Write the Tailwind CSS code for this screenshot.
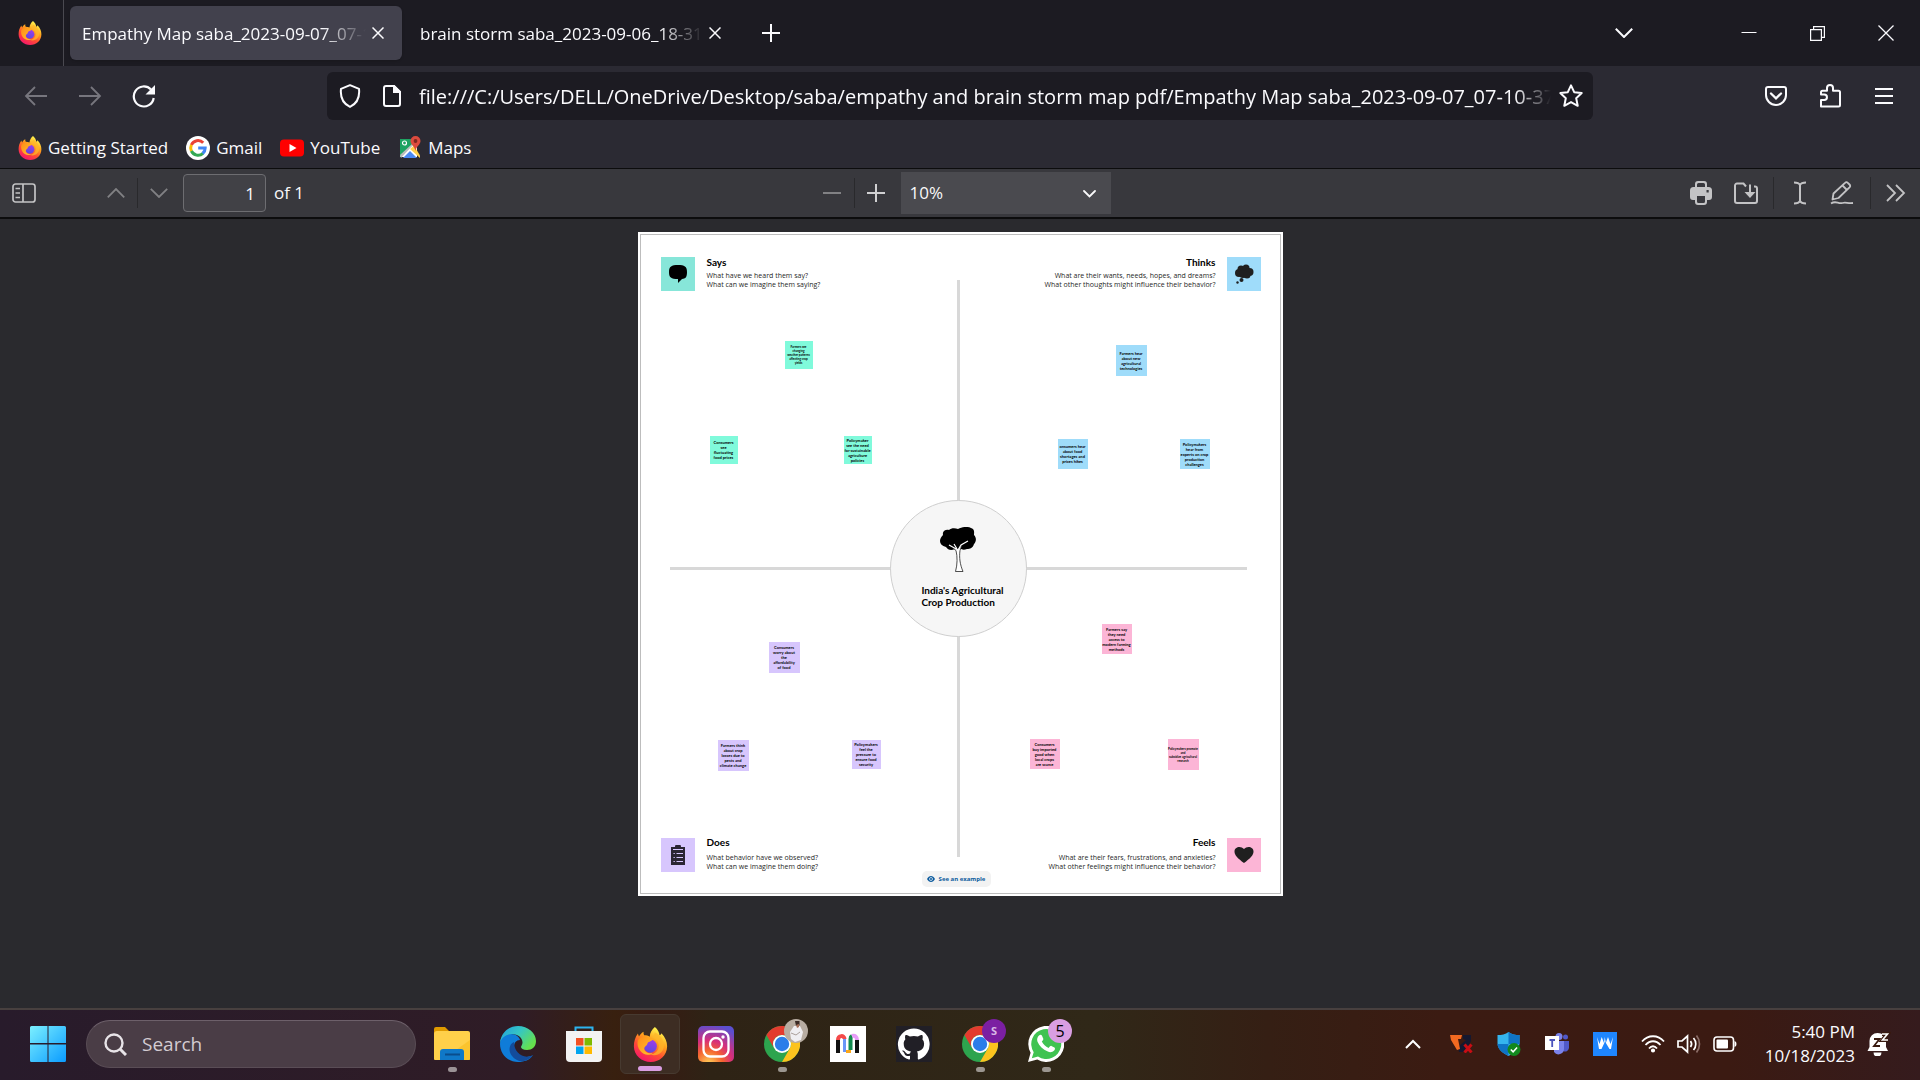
<!DOCTYPE html>
<html lang="en">
<head>
<meta charset="utf-8">
<title>Empathy Map saba_2023-09-07_07-10-37.pdf</title>
<script src="https://cdn.jsdelivr.net/npm/@tailwindcss/browser@4"></script>
</head>
<body class="min-h-screen flex flex-col bg-[#2a2a2e] text-[#fbfbfe] font-['Open_Sans',sans-serif] text-[17px] overflow-hidden">

<svg class="absolute size-0" aria-hidden="true">
  <defs>
    <linearGradient id="ffBody" x1="0.8" y1="0.1" x2="0.3" y2="1"><stop offset="0" stop-color="#fff44f"/><stop offset=".35" stop-color="#ffa01c"/><stop offset=".65" stop-color="#ff4b34"/><stop offset="1" stop-color="#f5156c"/></linearGradient>
    <linearGradient id="ffGlobe" x1="0.7" y1="0" x2="0.4" y2="1"><stop offset="0" stop-color="#a13be8"/><stop offset="1" stop-color="#5a4ae0"/></linearGradient>
    <linearGradient id="ffHead" x1="0" y1="0" x2="1" y2="1"><stop offset="0" stop-color="#ff8a16"/><stop offset="1" stop-color="#ffc42c"/></linearGradient>
    <symbol id="firefox" viewBox="0 0 32 32">
      <path fill="url(#ffBody)" d="M20 0c3 2.600 4 5 4.300 7.500 1-.6 1.500-1 1.700-1.900 3.400 3.600 5.200 7.600 5.200 12C31.200 26 24.500 32 16.200 32S.8 26 .8 17.600c0-4.200 1.200-8.300 3.700-11.600.2 1 .5 1.800 1 2.600C6.500 6.700 8 5.200 9.700 4.300c-.2 1.300 0 2.300.6 3.300 2 0 3.600.4 5 1.200C15.500 5.400 17.300 2 20 0z"/>
      <circle cx="15.800" cy="17.500" r="6" fill="url(#ffGlobe)"/>
      <path fill="url(#ffHead)" d="M4.500 12c2-3 5.500-4.200 9-2.900 1.500.6 2.500 1.500 4.700 1.800-.4 1.800-2.800 2.200-4.300 3.100-.9.700-.5 2-1.700 3-1.800 1.200-2.600 3.200-1 5 1.500 2 4.200 2.400 6.800 1.900-3.300 2.300-8.500 1.800-11.300-1.900-2.400-3.200-3.200-6.700-2.200-10z"/>
      <path fill="#ffb52a" opacity=".75" d="M17.500 9.500c3.500.8 6 3.600 6.100 7.400.1 4.600-3.500 8-8 8.200 6.500 2.600 13-2 12.700-8.800-.2-5-4-9.500-8.300-11.300-.4 1.800-1.600 2.900-2.500 4.500z"/>
    </symbol>
    <symbol id="chrome" viewBox="0 0 36 36">
      <circle cx="18" cy="18" r="18" fill="#2da44e"/>
      <path fill="#e33b2e" d="M2.400 9A18 18 0 0 1 33.600 9H18a9 9 0 0 0-7.800 13.500z"/>
      <path fill="#fcc31e" d="M33.600 9A18 18 0 0 1 18 36l7.800-13.500A9 9 0 0 0 18 9z"/>
      <circle cx="18" cy="18" r="9" fill="#fff"/><circle cx="18" cy="18" r="7.200" fill="#2b7de9"/>
    </symbol>
  </defs>
</svg>

<!-- Tab strip -->
<header class="h-[66px] bg-[#1c1b22] flex items-center shrink-0">
  <div class="w-16 h-full flex items-center pl-[18px] border-r border-[#4a4950]"><svg class="size-6"><use href="#firefox"/></svg></div>
  <div role="tablist" class="flex items-center ml-1.5">
    <div role="tab" aria-selected="true" class="w-[332px] h-[54px] rounded-md bg-[#42414d] flex items-center pl-3 pr-3 shadow">
      <span class="flex-1 pt-px overflow-hidden whitespace-nowrap [mask-image:linear-gradient(to_left,transparent,black_44px)]">Empathy Map saba_2023-09-07_07-10-37.pdf</span>
      <button aria-label="Close tab" class="size-6 grid place-items-center"><svg class="size-3" viewBox="0 0 12 12" fill="none" stroke="currentColor" stroke-width="1.500"><path d="M.5.5l11 11M11.500.5l-11 11"/></svg></button>
    </div>
    <div role="tab" aria-selected="false" class="w-[338px] h-[54px] flex items-center pl-[18px] pr-[13px]">
      <span class="flex-1 pt-px overflow-hidden whitespace-nowrap [mask-image:linear-gradient(to_left,transparent,black_44px)]">brain storm saba_2023-09-06_18-31-25.pdf</span>
      <button aria-label="Close tab" class="size-6 grid place-items-center"><svg class="size-3" viewBox="0 0 12 12" fill="none" stroke="currentColor" stroke-width="1.500"><path d="M.5.5l11 11M11.500.5l-11 11"/></svg></button>
    </div>
  </div>
  <button aria-label="New tab" class="ml-[13px] size-[36px] grid place-items-center"><svg class="size-[18px]" viewBox="0 0 18 18" stroke="currentColor" stroke-width="2"><path d="M9 0v18M0 9h18"/></svg></button>
  <div class="ml-auto flex items-center">
    <button aria-label="List all tabs" class="w-[60px] mr-[60px] grid place-items-center"><svg class="w-[18px] h-[10px]" viewBox="0 0 18 10" fill="none" stroke="currentColor" stroke-width="2"><path d="M.8.8L9 9 17.200.8"/></svg></button>
    <button aria-label="Minimize" class="w-[69px] grid place-items-center"><svg class="w-4 h-4" viewBox="0 0 16 16" stroke="currentColor"><path d="M.5 7.500h15"/></svg></button>
    <button aria-label="Restore" class="w-[69px] grid place-items-center"><svg class="size-[15px]" viewBox="0 0 15 15" fill="none" stroke="currentColor" stroke-width="1.200"><path d="M.6 3.600h10.800v10.800H.6zM3.600 3.600v-3h10.800v10.800h-3"/></svg></button>
    <button aria-label="Close" class="w-[68px] grid place-items-center"><svg class="size-4" viewBox="0 0 16 16" stroke="currentColor" stroke-width="1.300"><path d="M.5.5l15 15M15.500.5l-15 15"/></svg></button>
  </div>
</header>

<!-- Address bar -->
<nav class="h-[60px] bg-[#2b2a33] flex items-center shrink-0">
  <div class="w-[327px] flex items-center pl-[9px]">
    <button aria-label="Back" class="w-[54px] grid place-items-center text-[#77767e]"><svg class="size-6" viewBox="0 0 24 24" fill="none" stroke="currentColor" stroke-width="1.800"><path d="M11 3l-9 9 9 9M2 12h21"/></svg></button>
    <button aria-label="Forward" class="w-[54px] grid place-items-center text-[#77767e]"><svg class="size-6" viewBox="0 0 24 24" fill="none" stroke="currentColor" stroke-width="1.800"><path d="M13 3l9 9-9 9M22 12H1"/></svg></button>
    <button aria-label="Reload" class="w-[54px] grid place-items-center"><svg class="size-6" viewBox="0 0 24 24" fill="none" stroke="currentColor" stroke-width="2.200"><path d="M21.700 14A10 10 0 1 1 19 5.500"/><path fill="currentColor" stroke="none" d="M23 1v9.500h-9.500z"/></svg></button>
  </div>
  <div class="flex-1 min-w-0 h-12 rounded-md bg-[#1c1b22] flex items-center pl-3 pr-2.5">
    <svg class="w-[22px] h-6 shrink-0" viewBox="0 0 22 24" fill="none" stroke="currentColor" stroke-width="2"><path d="M11 1.200l9 3.700c.8 7.500-1.500 14.500-9 18-7.500-3.500-9.800-10.500-9-18z" stroke-linejoin="round"/></svg>
    <svg class="w-[18px] h-[22px] ml-[22px] shrink-0" viewBox="0 0 18 22" fill="none" stroke="currentColor" stroke-width="2"><path d="M11 1H3a2 2 0 0 0-2 2v16a2 2 0 0 0 2 2h12a2 2 0 0 0 2-2V7z"/><path fill="currentColor" d="M11 1v6h6z"/></svg>
    <input aria-label="Address" class="flex-1 min-w-0 ml-[18px] pt-0.5 text-[20px] bg-transparent outline-none [mask-image:linear-gradient(to_left,transparent,black_36px)]" value="file:///C:/Users/DELL/OneDrive/Desktop/saba/empathy and brain storm map pdf/Empathy Map saba_2023-09-07_07-10-37.pdf">
    <button aria-label="Bookmark this page" class="ml-2"><svg class="size-6" viewBox="0 0 24 24" fill="none" stroke="currentColor" stroke-width="2" stroke-linejoin="round"><path d="M12 1.300l3.200 6.900 7.500.9-5.500 5.200 1.500 7.500-6.700-3.700-6.700 3.700 1.500-7.500L1.300 9.100l7.500-.9z"/></svg></button>
  </div>
  <div class="w-[327px] flex items-center justify-end pr-[9px]">
    <button aria-label="Save to Pocket" class="w-[54px] grid place-items-center"><svg class="size-[22px]" viewBox="0 0 22 22" fill="none" stroke="currentColor" stroke-width="2"><path d="M3 2h16a2 2 0 0 1 2 2v6a10 10 0 0 1-20 0V4a2 2 0 0 1 2-2z"/><path d="M6 8.500l5 4.800 5-4.800" stroke-width="2.300" stroke-linecap="round"/></svg></button>
    <button aria-label="Extensions" class="w-[54px] grid place-items-center"><svg class="w-[22px] h-6" viewBox="0 0 22 24" fill="none" stroke="currentColor" stroke-width="2" stroke-linejoin="round"><path d="M2 22.500V16h3.200a2.700 2.700 0 0 0 0-5.500H2V8.200a1.500 1.500 0 0 1 1.500-1.500H8V4a3 3 0 0 1 6 0v2.700h5.500A1.500 1.500 0 0 1 21 8.200V21a1.500 1.500 0 0 1-1.500 1.500z"/></svg></button>
    <button aria-label="Menu" class="w-[54px] grid place-items-center"><svg class="w-[18px] h-4" viewBox="0 0 18 16" stroke="currentColor" stroke-width="1.800"><path d="M0 1h18M0 8h18M0 15h18"/></svg></button>
  </div>
</nav>

<!-- Bookmarks -->
<div class="h-[42px] bg-[#2b2a33] flex items-center gap-[18px] pl-[18px] pt-px shrink-0">
  <a href="#" class="flex items-center gap-1.5"><svg class="size-6"><use href="#firefox"/></svg>Getting Started</a>
  <a href="#" class="flex items-center gap-1.5"><svg class="size-6" viewBox="0 0 24 24"><circle cx="12" cy="12" r="12" fill="#fff"/><g fill="none" stroke-width="3"><path stroke="#ea4335" d="M5.300 9A7.300 7.300 0 0 1 17.200 6.800"/><path stroke="#fbbc05" d="M5.400 15.100a7.300 7.300 0 0 1 0-6.300"/><path stroke="#34a853" d="M17 17.300A7.300 7.300 0 0 1 5.400 15"/><path stroke="#4285f4" d="M12.200 12h7a7.300 7.300 0 0 1-2.500 5.500"/></g></svg>Gmail</a>
  <a href="#" class="flex items-center gap-1.5"><svg class="size-6" viewBox="0 0 24 24"><rect y="3.500" width="24" height="17" rx="4" fill="#f00"/><path fill="#fff" d="M9.500 8l7 4-7 4z"/></svg>YouTube</a>
  <a href="#" class="flex items-center gap-1.5"><svg class="size-6" viewBox="0 0 24 24"><path fill="#1ea362" d="M2 3h16v18H2z"/><path fill="#fff" d="M2 21L19 5v16z"/><path fill="#4a89f3" d="M5 22l7-7 7 7z"/><path fill="#ffd04b" d="M12 13l4-3.500 6 10V22z"/><path fill="#bdbdbd" d="M2 19L14 8v2L3 22z"/><circle cx="6.500" cy="7" r="2" fill="none" stroke="#fff" stroke-width="1.200"/><path fill="#dc4b3e" d="M17.500 0a5 5 0 0 1 5 5c0 3.500-4 5-5 10-1-5-5-6.500-5-10a5 5 0 0 1 5-5z"/><circle cx="17.500" cy="5" r="1.900" fill="#7b2820"/></svg>Maps</a>
</div>

<!-- PDF viewer toolbar -->
<div class="h-[51px] bg-[#38383d] border-t border-b-2 border-[#0c0c0d] flex items-center shrink-0 text-[#f9f9fa]">
  <div class="flex-1 flex items-center pl-3">
    <button aria-label="Toggle sidebar" class="text-[#c3c3c5]"><svg class="w-6 h-[20px]" viewBox="0 0 24 20" fill="none" stroke="currentColor" stroke-width="1.700"><rect x="1" y="1" width="22" height="18" rx="2.500"/><path d="M11 1v18M3.500 5.500H8M3.500 10H8M3.500 14.500H8"/></svg></button>
    <button aria-label="Previous page" class="ml-[59px] w-[42px] grid place-items-center text-[#818184]"><svg class="w-[18px] h-[10px]" viewBox="0 0 18 10" fill="none" stroke="currentColor" stroke-width="1.800"><path d="M.8 9.300L9 1l8.200 8.300"/></svg></button>
    <div class="w-px h-[30px] bg-[#29292c]"></div>
    <button aria-label="Next page" class="w-[42px] grid place-items-center text-[#818184]"><svg class="w-[18px] h-[10px]" viewBox="0 0 18 10" fill="none" stroke="currentColor" stroke-width="1.800"><path d="M.8.8L9 9 17.200.8"/></svg></button>
    <label class="flex items-center gap-2 ml-[3px]"><input aria-label="Page" value="1" class="w-[83px] h-[38px] bg-[#414146] border border-[#6d6d71] rounded-sm text-right pr-2.5 outline-none">of 1</label>
  </div>
  <div class="flex items-center pr-2">
    <button aria-label="Zoom out" class="w-[38px] h-8 grid place-items-center text-[#818184]"><svg class="w-[18px] h-[18px]" viewBox="0 0 18 18" stroke="currentColor" stroke-width="2"><path d="M0 9h18"/></svg></button>
    <div class="w-px h-[30px] ml-[3px] bg-[#29292c]"></div>
    <button aria-label="Zoom in" class="w-[42px] h-8 grid place-items-center text-[#d0d0d2]"><svg class="w-[18px] h-[18px]" viewBox="0 0 18 18" stroke="currentColor" stroke-width="2"><path d="M0 9h18M9 0v18"/></svg></button>
    <div class="relative ml-1">
      <select aria-label="Zoom" class="appearance-none w-[210px] h-[42px] bg-[#4a4a4f] pl-[9px] text-[17px] outline-none"><option>10%</option></select>
      <svg class="absolute right-[15px] top-[18px] w-[13px] h-2 pointer-events-none" viewBox="0 0 13 8" fill="none" stroke="currentColor" stroke-width="1.800" stroke-linecap="round"><path d="M1 1l5.500 5.500L12 1"/></svg>
    </div>
  </div>
  <div class="flex-1 flex items-center justify-end pr-px text-[#c3c3c5]">
    <button aria-label="Print" class="w-[45px] grid place-items-center"><svg class="w-6 h-6" viewBox="0 0 24 24"><path fill="currentColor" fill-rule="evenodd" d="M6 6V3a3 3 0 0 1 3-3h6a3 3 0 0 1 3 3v3h1.500A3.500 3.500 0 0 1 23 9.500V16a3 3 0 0 1-3 3h-2v2a3 3 0 0 1-3 3H9a3 3 0 0 1-3-3v-2H4a3 3 0 0 1-3-3V9.500A3.500 3.500 0 0 1 4.500 6zm2 0h8V3.500A1.500 1.500 0 0 0 14.500 2h-5A1.500 1.500 0 0 0 8 3.500zm0 9v5.500A1.500 1.500 0 0 0 9.500 22h5a1.500 1.500 0 0 0 1.500-1.500V15zm9.500-6v2.500h2.200V9z"/></svg></button>
    <button aria-label="Save" class="w-[45px] mr-[5px] grid place-items-center"><svg class="w-6 h-6" viewBox="0 0 24 24" fill="none" stroke="currentColor" stroke-width="2"><path d="M12 5.500L9.500 2.500H3A2 2 0 0 0 1 4.500V20a2 2 0 0 0 2 2h18a2 2 0 0 0 2-2V7.500a2 2 0 0 0-2-2h-1"/><path d="M16 3.500V14"/><path fill="currentColor" stroke="none" d="M10.500 11h11L16 17z"/></svg></button>
    <div class="w-px h-8 bg-[#29292c]"></div>
    <button aria-label="Text" class="w-[42px] ml-[5px] grid place-items-center"><svg class="w-4 h-6" viewBox="0 0 16 24" fill="none" stroke="currentColor" stroke-width="2"><path d="M2 1.500c3 0 5 .5 6 2.500 1-2 3-2.500 6-2.500M8 3v18M2 22.500c3 0 5-.5 6-2.500 1 2 3 2.500 6 2.500"/></svg></button>
    <button aria-label="Draw" class="w-[42px] mr-[7px] grid place-items-center"><svg class="w-6 h-6" viewBox="0 0 24 24" fill="none" stroke="currentColor" stroke-width="1.800" stroke-linejoin="round"><path d="M2.500 18.500l1-6L15 1.800a2 2 0 0 1 2.800 0l1.700 1.700a2 2 0 0 1 0 2.800L8.500 17z"/><path d="M12.500 4.500l4.500 4.500"/><path d="M1 22.500c5-3.500 7 .8 11.500-.5 3-1 5 .5 10.500 0"/></svg></button>
    <div class="w-px h-8 bg-[#29292c]"></div>
    <button aria-label="Tools" class="w-[46px] ml-0.5 grid place-items-center"><svg class="w-5 h-[18px]" viewBox="0 0 20 18" fill="none" stroke="currentColor" stroke-width="1.800"><path d="M1 1l8 8-8 8M10 1l8 8-8 8"/></svg></button>
  </div>
</div>

<!-- Document -->
<main class="flex-1 flex justify-center pt-[13px]">
  <article class="relative w-[645px] h-[664px] bg-white p-0.5 text-[#1f1f1f] shrink-0">
    <div class="h-full border border-[#bdbdbd] pl-5 pr-[19px] pt-[22px] pb-[21px] flex flex-col justify-between">
      <div class="flex justify-between text-[7px] leading-[9px] [&_h2]:font-['Lato'] [&_h2]:text-[10px] [&_h2]:leading-[10px] [&_h2]:mb-1 [&_h2]:font-bold [&_h2]:text-black">
        <section class="flex gap-3">
          <div class="size-[34px] bg-[#87e6d9] grid place-items-center"><svg class="size-5" viewBox="0 0 20 20"><path d="M10 1c6.500 0 9 1.500 9 7s-1.500 6.600-5 7l-4 4v-4C3 15 1 13.500 1 8s2.500-7 9-7z"/></svg></div>
          <div><h2>Says</h2><p>What have we heard them say?<br>What can we imagine them saying?</p></div>
        </section>
        <section class="flex gap-[11px] text-right">
          <div><h2>Thinks</h2><p>What are their wants, needs, hopes, and dreams?<br>What other thoughts might influence their behavior?</p></div>
          <div class="size-[34px] bg-[#9fdcfa] grid place-items-center"><svg class="size-5" viewBox="0 0 20 20" fill="#1f1f1f"><circle cx="5" cy="9" r="4"/><circle cx="7" cy="5" r="3.500"/><circle cx="12" cy="4" r="3.500"/><circle cx="15.500" cy="8" r="4"/><circle cx="9" cy="10" r="4"/><circle cx="13" cy="11" r="3.500"/><circle cx="7.500" cy="16" r="2"/><circle cx="3.500" cy="18.500" r="1.200"/></svg></div>
        </section>
      </div>
      <div class="flex justify-between text-[7px] leading-[9px] [&_h2]:font-['Lato'] [&_h2]:text-[10px] [&_h2]:leading-[8px] [&_h2]:mb-[7px] [&_h2]:font-bold [&_h2]:text-black">
        <section class="flex gap-3">
          <div class="size-[34px] bg-[#d7c6fd] grid place-items-center"><svg class="size-5" viewBox="0 0 20 20"><path fill="#2b2533" d="M3 2h4a3 3 0 0 1 6 0h4v18H3z"/><path stroke="#d7c6fd" d="M5 4.500h10M8.500 8.500H15M8.500 12.500H15M8.500 16.500H15M5.500 8.500h1.300M5.500 12.500h1.300M5.500 16.500h1.300"/></svg></div>
          <div><h2>Does</h2><p>What behavior have we observed?<br>What can we imagine them doing?</p></div>
        </section>
        <section class="flex gap-[11px] text-right">
          <div><h2>Feels</h2><p>What are their fears, frustrations, and anxieties?<br>What other feelings might influence their behavior?</p></div>
          <div class="size-[34px] bg-[#fcb5d6] grid place-items-center"><svg class="size-5" viewBox="0 0 20 20"><path fill="#1f1f1f" d="M10 18C4 13.500.5 10.500.5 6.500.5 1.500 7 .5 10 4c3-3.500 9.500-2.500 9.500 2.500 0 4-3.500 7-9.500 11.500z"/></svg></div>
        </section>
      </div>
    </div>

    <!-- Axes and centre topic -->
    <div class="absolute left-[319px] top-12 w-[3px] h-[577px] bg-[#d8d8d8]"></div>
    <div class="absolute left-8 top-[335px] w-[577px] h-[3px] bg-[#d8d8d8]"></div>
    <div class="absolute left-[252px] top-[268px] size-[137px] rounded-full bg-[#f6f6f6] border border-[#cfcfcf] flex flex-col items-center pt-[26px]">
      <svg class="w-9 h-[45px]" viewBox="0 0 36 45"><path d="M3 8C2 4 6 2 9 3c2-2 6-2 9-1 4-2 9-3 13-1 4 1 3 5 3 7 3 3 2 7 0 9-1 4-4 5-7 5-3 1-5 1-7-1-2 2-4 1-5 1-4 2-7 1-9-2-4-1-6-3-6-6 0-2 1-4 3-6z"/><path fill="#fff" stroke="#222" stroke-width=".8" d="M15.500 44.500c2-7 2-15 .5-21l-3-2.500 5 1.500 4-5-2 6c-1 7 0 14 3 21z"/><path fill="none" stroke="#fff" stroke-width="1.200" d="M9 18l9 5 3-5 7-4M14 17l3 5"/></svg>
      <h1 class="mt-3 pl-[9px] text-[10px] leading-3 font-bold font-['Lato'] text-black whitespace-nowrap">India's Agricultural<br>Crop Production</h1>
    </div>

    <!-- Sticky notes -->
    <div class="font-['Lato'] font-bold text-black text-center text-[4px] leading-[5px] whitespace-nowrap">
      <p class="absolute left-[147px] top-[109px] size-7 bg-[#80fadb] grid place-content-center text-[3px] leading-[4px]">Farmers see<br>changing<br>weather patterns<br>affecting crop<br>yields</p>
      <p class="absolute left-[72px] top-[204px] size-7 bg-[#80fadb] grid place-content-center">Consumers<br>see<br>fluctuating<br>food prices</p>
      <p class="absolute left-[206px] top-[204px] size-7 bg-[#80fadb] grid place-content-center">Policymaker<br>see the need<br>for sustainable<br>agriculture<br>policies</p>
      <p class="absolute left-[478px] top-[113px] size-[31px] bg-[#9fdcfa] grid place-content-center">Farmers hear<br>about new<br>agricultural<br>technologies</p>
      <p class="absolute left-[420px] top-[207px] size-[30px] bg-[#9fdcfa] grid place-content-center">onsumers hear<br>about food<br>shortages and<br>prices hikes</p>
      <p class="absolute left-[542px] top-[207px] size-[30px] bg-[#9fdcfa] grid place-content-center">Policymakers<br>hear from<br>experts on crop<br>production<br>challenges</p>
      <p class="absolute left-[131px] top-[410px] size-[31px] bg-[#d7c6fd] grid place-content-center">Consumers<br>worry about<br>the<br>affordability<br>of food</p>
      <p class="absolute left-20 top-[508px] size-[31px] bg-[#d7c6fd] grid place-content-center">Farmers think<br>about crop<br>losses due to<br>pests and<br>climate change</p>
      <p class="absolute left-[214px] top-[508px] size-[29px] bg-[#d7c6fd] grid place-content-center">Policymakers<br>feel the<br>pressure to<br>ensure food<br>security</p>
      <p class="absolute left-[464px] top-[392px] size-[30px] bg-[#fcb5d6] grid place-content-center">Farmers say<br>they need<br>access to<br>modern farming<br>methods</p>
      <p class="absolute left-[392px] top-[507px] size-[30px] bg-[#fcb5d6] grid place-content-center">Consumers<br>buy imported<br>good when<br>local crops<br>are scarce</p>
      <p class="absolute left-[530px] top-[507px] size-[31px] bg-[#fcb5d6] grid place-content-center text-[3px] leading-[4px]">Policymakers promote<br>and<br>subsidize agricultural<br>research</p>
    </div>
    <a href="#" class="absolute left-[284px] top-[639px] w-[69px] h-4 rounded-[5px] bg-[#f2f2f2] flex items-center justify-center gap-1 text-[6px] font-bold text-[#0b5a9d] whitespace-nowrap"><svg class="w-2 h-[6px]" viewBox="0 0 8 6"><path fill="currentColor" d="M0 3c2-4 6-4 8 0-2 4-6 4-8 0z"/><circle cx="4" cy="3" r="1.500" fill="none" stroke="#fff" stroke-width=".7"/></svg>See an example</a>
  </article>
</main>

<!-- Taskbar -->
<footer class="h-[72px] shrink-0 border-t-2 border-[#48403f] pb-0.5 flex items-center bg-[linear-gradient(90deg,#281b2b_0%,#2f1c26_27%,#38200f_32%,#371b13_34%,#2e2315_37%,#302818_57%,#351f14_66%,#3b1b12_75%,#3b1a12_90%,#351b1d_100%)]">
  <button aria-label="Start" class="ml-[30px]"><svg class="size-9" viewBox="0 0 36 36"><defs><linearGradient id="win" x1="0" y1="0" x2="1" y2="1"><stop stop-color="#7cf0ff"/><stop offset="1" stop-color="#0a9bff"/></linearGradient></defs><path fill="url(#win)" d="M1.500 0h16v17H0V1.500A1.500 1.500 0 0 1 1.500 0zM18.500 0h16A1.500 1.500 0 0 1 36 1.500V17H18.500zM0 18.500h17.500V36h-16A1.500 1.500 0 0 1 0 34.500zM18.500 18.500H36v16a1.500 1.500 0 0 1-1.500 1.500h-16z"/></svg></button>
  <label class="ml-5 w-[330px] h-12 rounded-full bg-[#4a3d46] border border-[#5a4d56] border-t-[#6d606a] flex items-center pl-[17px] gap-[15px]">
    <svg class="size-[23px] shrink-0" viewBox="0 0 23 23" fill="none" stroke="#e8e4e8" stroke-width="2.400"><circle cx="10" cy="10" r="8.500"/><path d="M16 16l6 6" stroke-width="3"/></svg>
    <input aria-label="Search" placeholder="Search" class="w-full bg-transparent outline-none text-[19px] placeholder:text-[#d3ccd2]">
  </label>
  <div class="flex gap-1.5 ml-1.5 [&>button]:relative [&>button]:size-[60px] [&>button]:grid [&>button]:place-items-center [&_i]:absolute [&_i]:bottom-0.5 [&_i]:h-[5px] [&_i]:rounded-full">
    <button aria-label="File Explorer"><svg class="size-9" viewBox="0 0 36 36"><path fill="#e09a00" d="M0 3a2 2 0 0 1 2-2h9l4 4h-1v5H0z"/><path fill="#ffd04a" d="M0 8c0-2 1-3 3-3h31a2 2 0 0 1 2 2v26a1 1 0 0 1-1 1H1a1 1 0 0 1-1-1z"/><path fill="#f9bd1c" d="M36 14v19a1 1 0 0 1-1 1H8z" opacity=".6"/><path fill="#0f78c8" d="M6 34v-8a3 3 0 0 1 3-3h18a3 3 0 0 1 3 3v8z"/><path stroke="#0a4d8c" stroke-width="2" d="M11 28.500h15"/></svg><i class="w-[9px] bg-[#9b9396]"></i></button>
    <button aria-label="Edge"><svg class="size-9" viewBox="0 0 36 36"><defs><linearGradient id="eg" x1="0" y1="0" x2="1" y2=".6"><stop stop-color="#1f9de0"/><stop offset=".5" stop-color="#35c6c4"/><stop offset="1" stop-color="#66e04c"/></linearGradient></defs><path fill="#0f7cd8" d="M0 18C0 10 5 8 11 8c7 0 9 5 9 6-4 0-6 3-6 7 0 7 7 11 13 10 3-.5 5-1 6-2C30 34 24 36 18 36 8 36 0 28 0 18z"/><path fill="#134c9c" d="M14 16c-5 2-6 9-2 14 3 4 8 6 12 5 4-1 7-3 9-6-9 5-19-2-19-13z"/><path fill="url(#eg)" d="M0 17C1 7 8 0 18 0s18 7 18 15c0 6-4 9-9 9-4 0-6-1.500-6-3 0-1 1.500-2 1.500-4.500C22.500 12 18 8 12 8 6 8 1 12 0 17z"/></svg></button>
    <button aria-label="Store"><svg class="size-9" viewBox="0 0 36 36"><path fill="none" stroke="#2cb4ee" stroke-width="2" d="M9.500 7V1.500h17V7"/><path fill="#f3f3f3" d="M0 5h36v27a4 4 0 0 1-4 4H4a4 4 0 0 1-4-4z"/><path fill="#f25022" d="M10 12h7.500v7.500H10z"/><path fill="#7fba00" d="M18.500 12H26v7.500h-7.500z"/><path fill="#00a4ef" d="M10 20.500h7.500V28H10z"/><path fill="#ffb900" d="M18.500 20.500H26V28h-7.500z"/></svg></button>
    <button aria-label="Firefox" class="rounded-md bg-[#3d2d23] border border-[#473a30]"><svg class="size-[35px]"><use href="#firefox"/></svg><i class="w-6 bg-[#d99ee2]"></i></button>
    <button aria-label="Instagram"><svg class="size-9" viewBox="0 0 36 36"><defs><radialGradient id="ig" cx=".3" cy="1.050" r="1.100"><stop stop-color="#ffd35a"/><stop offset=".35" stop-color="#f4632f"/><stop offset=".6" stop-color="#d62e7b"/><stop offset="1" stop-color="#5b4fd0"/></radialGradient></defs><rect width="36" height="36" rx="5" fill="url(#ig)"/><g fill="none" stroke="#fff" stroke-width="2.300"><rect x="5.500" y="5.500" width="25" height="25" rx="6.500"/><circle cx="18" cy="18" r="6"/></g><circle cx="25" cy="11" r="1.700" fill="#fff"/></svg></button>
    <button aria-label="Chrome, profile 1"><svg class="size-9"><use href="#chrome"/></svg><svg class="absolute left-8 top-[5px] size-6" viewBox="0 0 24 24"><circle cx="12" cy="12" r="12" fill="#b8ada2"/><path fill="#efeef2" d="M6 13l4-6h6l3 6-2 8-6 2-4-3z"/><path fill="#3a2a25" d="M11 2h4.500v4.500l-3.500.5z"/><path fill="#a6705a" d="M12 6l3-1v3l-2 1z"/><path stroke="#8b7d74" fill="none" stroke-width=".7" d="M7 14l5 2 4-3"/></svg><i class="w-[9px] bg-[#9b9690]"></i></button>
    <button aria-label="Mural"><svg class="size-9" viewBox="0 0 36 36"><path fill="#fff" d="M0 0h36v36H0z"/><g fill="none" stroke-width="4"><path stroke="#111" d="M8 27V14M27 27V14"/><path stroke="#f44a4a" d="M8 14c0-5 6.500-5 6.500-1"/><path stroke="#6b96f8" stroke-width="3" d="M14.500 13v13"/><path stroke="#fba719" stroke-width="3" d="M16 25.500h5"/><path stroke="#128a4e" d="M20.500 24V13c0-1.500.5-2.500 1.500-3"/><path stroke="#e79cf8" d="M22 10c3-1 5 1 5 4"/></g></svg></button>
    <button aria-label="GitHub"><svg class="size-9" viewBox="0 0 36 36"><path fill="#211f26" d="M0 0h36v36H0z"/><path fill="#fff" transform="translate(2 2)" d="M16 .4a16 16 0 0 0-5.100 31.200c.8.100 1.100-.4 1.100-.8v-3c-4.500 1-5.400-1.900-5.400-1.900-.7-1.900-1.800-2.400-1.800-2.400-1.400-1 .1-1 .1-1 1.700.1 2.500 1.700 2.500 1.700 1.400 2.400 3.700 1.700 4.600 1.300.2-1 .6-1.700 1-2.100-3.500-.4-7.300-1.800-7.300-7.900 0-1.700.6-3.200 1.700-4.300-.2-.4-.8-2 .1-4.200 0 0 1.300-.5 4.400 1.600a15 15 0 0 1 8 0c3-2.100 4.400-1.600 4.400-1.600.9 2.200.3 3.800.1 4.200a6.300 6.300 0 0 1 1.700 4.300c0 6.200-3.800 7.500-7.300 7.900.6.500 1 1.500 1 2.900v4.400c0 .5.300 1 1.100.8A16 16 0 0 0 16 .4z"/></svg></button>
    <button aria-label="Chrome, profile 2"><svg class="size-9"><use href="#chrome"/></svg><span class="absolute left-8 top-[5px] size-6 rounded-full bg-[#7b1fa2] text-[#d9b8e6] text-[11px] leading-6 font-bold">S</span><i class="w-[9px] bg-[#9b9690]"></i></button>
    <button aria-label="WhatsApp, 5 unread"><svg class="size-9" viewBox="0 0 36 36"><path fill="#fff" d="M0 36l2.600-9.300A18 18 0 1 1 9.300 33.500z"/><path fill="#3fc351" d="M3.800 32.200l1.900-6A15 15 0 1 1 10 30.500z"/><path fill="#fff" d="M11 9.500c1-1 2.500-1 3 .2l1.300 3c.3 1-.9 2-1.500 2.800 1.500 3 3.700 5 6.800 6.400.8-.7 1.800-2.400 2.800-2l3 1.500c1 .5.500 2.300-.3 3.200-1.600 1.700-4 2-6.300 1-5-2-8.500-5.500-10.300-9.800-.8-2.200-.3-4.800 1.500-6.300z"/></svg><span class="absolute left-8 top-[5px] size-6 rounded-full bg-[#d99ee2] text-black text-[16px] leading-6">5</span><i class="w-[9px] bg-[#9b9690]"></i></button>
  </div>
  <div class="ml-auto flex items-center pr-[29px]">
    <button aria-label="Show hidden icons" class="w-12 grid place-items-center"><svg class="w-4 h-[10px]" viewBox="0 0 16 10" fill="none" stroke="#fff" stroke-width="2"><path d="M1 9l7-7 7 7"/></svg></button>
    <button aria-label="Antivirus" class="w-12 grid place-items-center"><svg class="w-6 h-[18px]" viewBox="0 0 24 18"><path fill="#14182f" d="M14 0h8v6l-6 11h-6l-1-5 8-7-3-1z"/><path fill="#f26a21" d="M1 0h12l-1 4H9l2 10-3 1L2 5z"/><path stroke="#c80d14" stroke-width="3" d="M15.500 9.500l7 8M22.500 9.500l-7 8"/></svg></button>
    <button aria-label="Windows Security" class="w-12 grid place-items-center"><svg class="size-6" viewBox="0 0 24 24"><path fill="#35b5ee" d="M11.500 0c3 2.500 7 3 11 3v8c0 6-5 10-11 13C5.500 21 .5 17 .5 11V3c4 0 8-.5 11-3z"/><path fill="#0f74c5" d="M11.500 0c3 2.500 7 3 11 3v9h-11zM.5 12h11v12C5.500 21 .5 17 .5 12z"/><circle cx="17" cy="17.500" r="6.500" fill="#12881e"/><path fill="none" stroke="#fff" stroke-width="1.500" d="M13.800 17.500l2.300 2.300 4-4.300"/></svg></button>
    <button aria-label="Teams" class="w-12 grid place-items-center"><svg class="size-6" viewBox="0 0 24 24"><circle cx="14" cy="4.500" r="3.500" fill="#7b83eb"/><circle cx="20.500" cy="5" r="2.500" fill="#5059c9"/><path fill="#5059c9" d="M16 9h8v7a4 4 0 0 1-6 3z"/><path fill="#7b83eb" d="M9 9h10v8a5.500 5.500 0 0 1-10 3z"/><path fill="#fff" d="M0 4h14v14H0z"/><path fill="none" stroke="#4b53bc" stroke-width="1.800" d="M4.500 8h5.500M7.200 8v7"/></svg></button>
    <button aria-label="W" class="w-12 grid place-items-center"><svg class="size-6" viewBox="0 0 24 24"><path fill="#1e86ff" d="M0 0h24v24H0z"/><path fill="#fff" d="M4 5l2.500 7L8.700 5l2.300 6 .8-6 1 6 2.200-6 2.500 7L20 5l-2 12h-1.500L12 9.500 8.500 17H6z"/></svg></button>
    <button aria-label="Network, volume and battery" class="flex items-center ml-3 gap-3">
      <svg class="w-6 h-[18px]" viewBox="0 0 24 18" fill="none" stroke="#fff" stroke-width="1.800"><path d="M1 6.500C7-.5 17-.5 23 6.500M4.500 10c4.500-5 10.500-5 15 0M8 13.500c2.500-3 5.500-3 8 0"/><circle cx="12" cy="15.500" r="1.200" fill="#fff"/></svg>
      <svg class="w-6 h-5" viewBox="0 0 24 20" fill="none" stroke="#fff" stroke-width="1.700"><path d="M1 7v6h4l5.500 5V2L5 7zM13.500 7a5 5 0 0 1 0 6M16.500 4a9 9 0 0 1 0 12"/><path stroke="#8b6e68" d="M19.500 1.500c4 5 4 12 0 17"/></svg>
      <svg class="w-6 h-4" viewBox="0 0 24 16"><rect x="1" y="1" width="19.500" height="14" rx="3" fill="none" stroke="#fff" stroke-width="1.600"/><rect x="3.500" y="3.500" width="11.500" height="9" rx="1" fill="#fff"/><path fill="#fff" d="M21.500 5a3 3 0 0 1 2 3 3 3 0 0 1-2 3z"/></svg>
    </button>
    <button class="ml-7 text-right text-[17px] leading-6">5:40 PM<br>10/18/2023</button>
    <button aria-label="Notifications" class="ml-3"><svg class="size-6" viewBox="0 0 24 24"><path fill="#fff" d="M2.500 9a8 8 0 0 1 8-8c5 0 8.500 3.500 8.500 8v6l2 4H.5l2-4z"/><path fill="#fff" d="M6.500 20.500h8a4 4 0 0 1-8 0z"/><path fill="none" stroke="#38190f" stroke-width="1.800" d="M7 7h5.500L7 14h6"/><path fill="none" stroke="#38190f" stroke-width="4" d="M15 2h5.500L15.500 8H21"/><path fill="none" stroke="#fff" stroke-width="1.600" d="M15 2h5.500L15.500 8H21"/></svg></button>
  </div>
</footer>
</body>
</html>
